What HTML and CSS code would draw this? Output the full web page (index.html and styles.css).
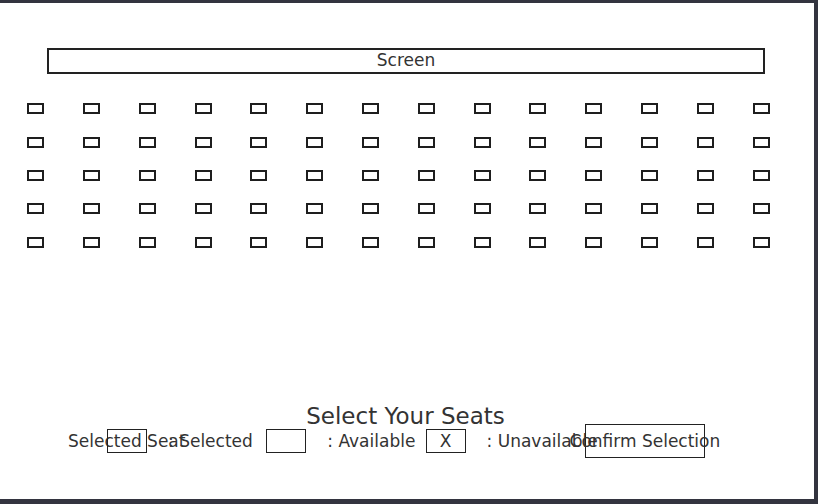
FILE: index.html
```html
<!DOCTYPE html>
<html>
<head>
<meta charset="utf-8">
<link rel="stylesheet" href="styles.css">
</head>
<body>
<div class="panel">
  <div class="screen">Screen</div>
  <div class="seats">
    <div class="seat"></div><div class="seat"></div><div class="seat"></div><div class="seat"></div><div class="seat"></div><div class="seat"></div><div class="seat"></div><div class="seat"></div><div class="seat"></div><div class="seat"></div><div class="seat"></div><div class="seat"></div><div class="seat"></div><div class="seat"></div>
    <div class="seat"></div><div class="seat"></div><div class="seat"></div><div class="seat"></div><div class="seat"></div><div class="seat"></div><div class="seat"></div><div class="seat"></div><div class="seat"></div><div class="seat"></div><div class="seat"></div><div class="seat"></div><div class="seat"></div><div class="seat"></div>
    <div class="seat"></div><div class="seat"></div><div class="seat"></div><div class="seat"></div><div class="seat"></div><div class="seat"></div><div class="seat"></div><div class="seat"></div><div class="seat"></div><div class="seat"></div><div class="seat"></div><div class="seat"></div><div class="seat"></div><div class="seat"></div>
    <div class="seat"></div><div class="seat"></div><div class="seat"></div><div class="seat"></div><div class="seat"></div><div class="seat"></div><div class="seat"></div><div class="seat"></div><div class="seat"></div><div class="seat"></div><div class="seat"></div><div class="seat"></div><div class="seat"></div><div class="seat"></div>
    <div class="seat"></div><div class="seat"></div><div class="seat"></div><div class="seat"></div><div class="seat"></div><div class="seat"></div><div class="seat"></div><div class="seat"></div><div class="seat"></div><div class="seat"></div><div class="seat"></div><div class="seat"></div><div class="seat"></div><div class="seat"></div>
  </div>
  <h2 class="title">Select Your Seats</h2>
  <div class="legend">
    <span class="lead">Selected Seat</span>
    <div class="item"><div class="box"></div><span class="label">: Selected</span></div>
    <div class="item"><div class="box"></div><span class="label">: Available</span></div>
    <div class="item"><div class="box">X</div><span class="label">: Unavailable</span></div>
    <button class="confirm">Confirm Selection</button>
  </div>
</div>
</body>
</html>
```
FILE: styles.css
```css
html, body {
  margin: 0;
  padding: 0;
}
body {
  background: #33343f;
  height: 504px;
  overflow: hidden;
  font-family: "DejaVu Sans", sans-serif;
  color: #333;
}
.panel {
  width: 814px;
  height: 496px;
  margin-top: 3px;
  background: #fff;
  display: flex;
  flex-direction: column;
}
.screen {
  box-sizing: border-box;
  width: 718px;
  height: 26px;
  margin: 45px 0 0 47px;
  border: 2px solid #222;
  text-align: center;
  font-size: 17px;
  line-height: 21px;
}
.seats {
  margin-top: 29.3px;
  padding-left: 27.3px;
  display: grid;
  grid-template-columns: repeat(14, 17px);
  grid-auto-rows: 11px;
  column-gap: 38.8px;
  row-gap: 22.33px;
}
.seat {
  box-sizing: border-box;
  border: 2px solid #1e1e1e;
  background: #fff;
}
.title {
  margin: 157.6px 0 0 0;
  padding-right: 3px;
  text-align: center;
  font-size: 23px;
  font-weight: normal;
  line-height: 22px;
}
.legend {
  margin-top: -2.9px;
  padding-left: 68px;
  height: 34px;
  display: flex;
  align-items: center;
  font-size: 17px;
}
.lead {
  width: 39px;
  flex: none;
  white-space: nowrap;
}
.item {
  width: 159.3px;
  flex: none;
  display: flex;
  align-items: center;
  gap: 21px;
  white-space: nowrap;
}
.box {
  box-sizing: border-box;
  width: 40px;
  height: 24px;
  flex: none;
  border: 1px solid #222;
  display: flex;
  align-items: center;
  justify-content: center;
  font-size: 17px;
}
.confirm {
  box-sizing: border-box;
  width: 120px;
  height: 34px;
  flex: none;
  padding: 0;
  border: 1px solid #222;
  background: transparent;
  color: #333;
  font-family: "DejaVu Sans", sans-serif;
  font-size: 17px;
  display: flex;
  align-items: center;
  justify-content: center;
  white-space: nowrap;
}
```
